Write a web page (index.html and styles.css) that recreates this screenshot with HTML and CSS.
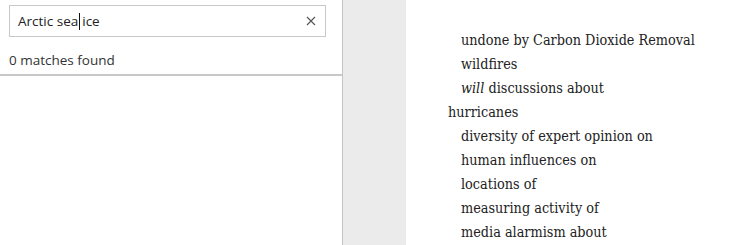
FILE: index.html
```html
<!DOCTYPE html>
<html lang="en">
<head>
    <meta charset="UTF-8">
    <title>Index search</title>
    <link rel="stylesheet" href="styles.css">
</head>
<body>
    <div class="search-panel">
        <div class="search-box">
            <div class="search-field">
                <span class="search-text">Arctic sea<span class="caret"></span>ice</span>
                <svg class="clear-icon" width="10" height="10" viewBox="0 0 10 10">
                    <path d="M1 1 L9 9 M9 1 L1 9" stroke="#555" stroke-width="1.1" fill="none"/>
                </svg>
            </div>
            <div class="match-count">0 matches found</div>
        </div>
    </div>
    <div class="gutter"></div>
    <div class="page">
        <ul class="index-list">
            <li class="sub">undone by Carbon Dioxide Removal</li>
            <li class="sub">wildfires</li>
            <li class="sub"><em>will</em> discussions about</li>
            <li>hurricanes</li>
            <li class="sub">diversity of expert opinion on</li>
            <li class="sub">human influences on</li>
            <li class="sub">locations of</li>
            <li class="sub">measuring activity of</li>
            <li class="sub">media alarmism about</li>
        </ul>
    </div>
</body>
</html>
```

FILE: styles.css
```css
body {
    margin: 0;
    height: 245px;
    display: flex;
    overflow: hidden;
    background: #fff;
}
.search-panel {
    width: 342px;
    border-right: 1px solid #c4c4c4;
    font-family: "Open Sans", sans-serif;
    font-size: 13.5px;
    color: #333;
}
.search-box {
    padding: 5px 16px 0 9px;
    border-bottom: 2px solid #c8c8c8;
}
.search-field {
    height: 30px;
    border: 1px solid #c8c8c8;
    display: flex;
    align-items: center;
    justify-content: space-between;
    padding: 0 9px 0 8px;
}
.search-text {
    color: #222;
}
.caret {
    display: inline-block;
    width: 1px;
    height: 17px;
    background: #111;
    vertical-align: -4px;
    margin: 0 2px 0 1px;
}
.match-count {
    padding: 14px 0 5px;
}
.gutter {
    width: 63px;
    background: #ebebeb;
}
.page {
    flex: 1;
    padding: 28px 0 0 42px;
}
.index-list {
    list-style: none;
    margin: 0;
    padding: 0;
    font-family: "DejaVu Serif Condensed", "DejaVu Serif", serif;
    font-size: 14.3px;
    line-height: 24px;
    color: #222;
}
.index-list .sub {
    padding-left: 13px;
}
```
